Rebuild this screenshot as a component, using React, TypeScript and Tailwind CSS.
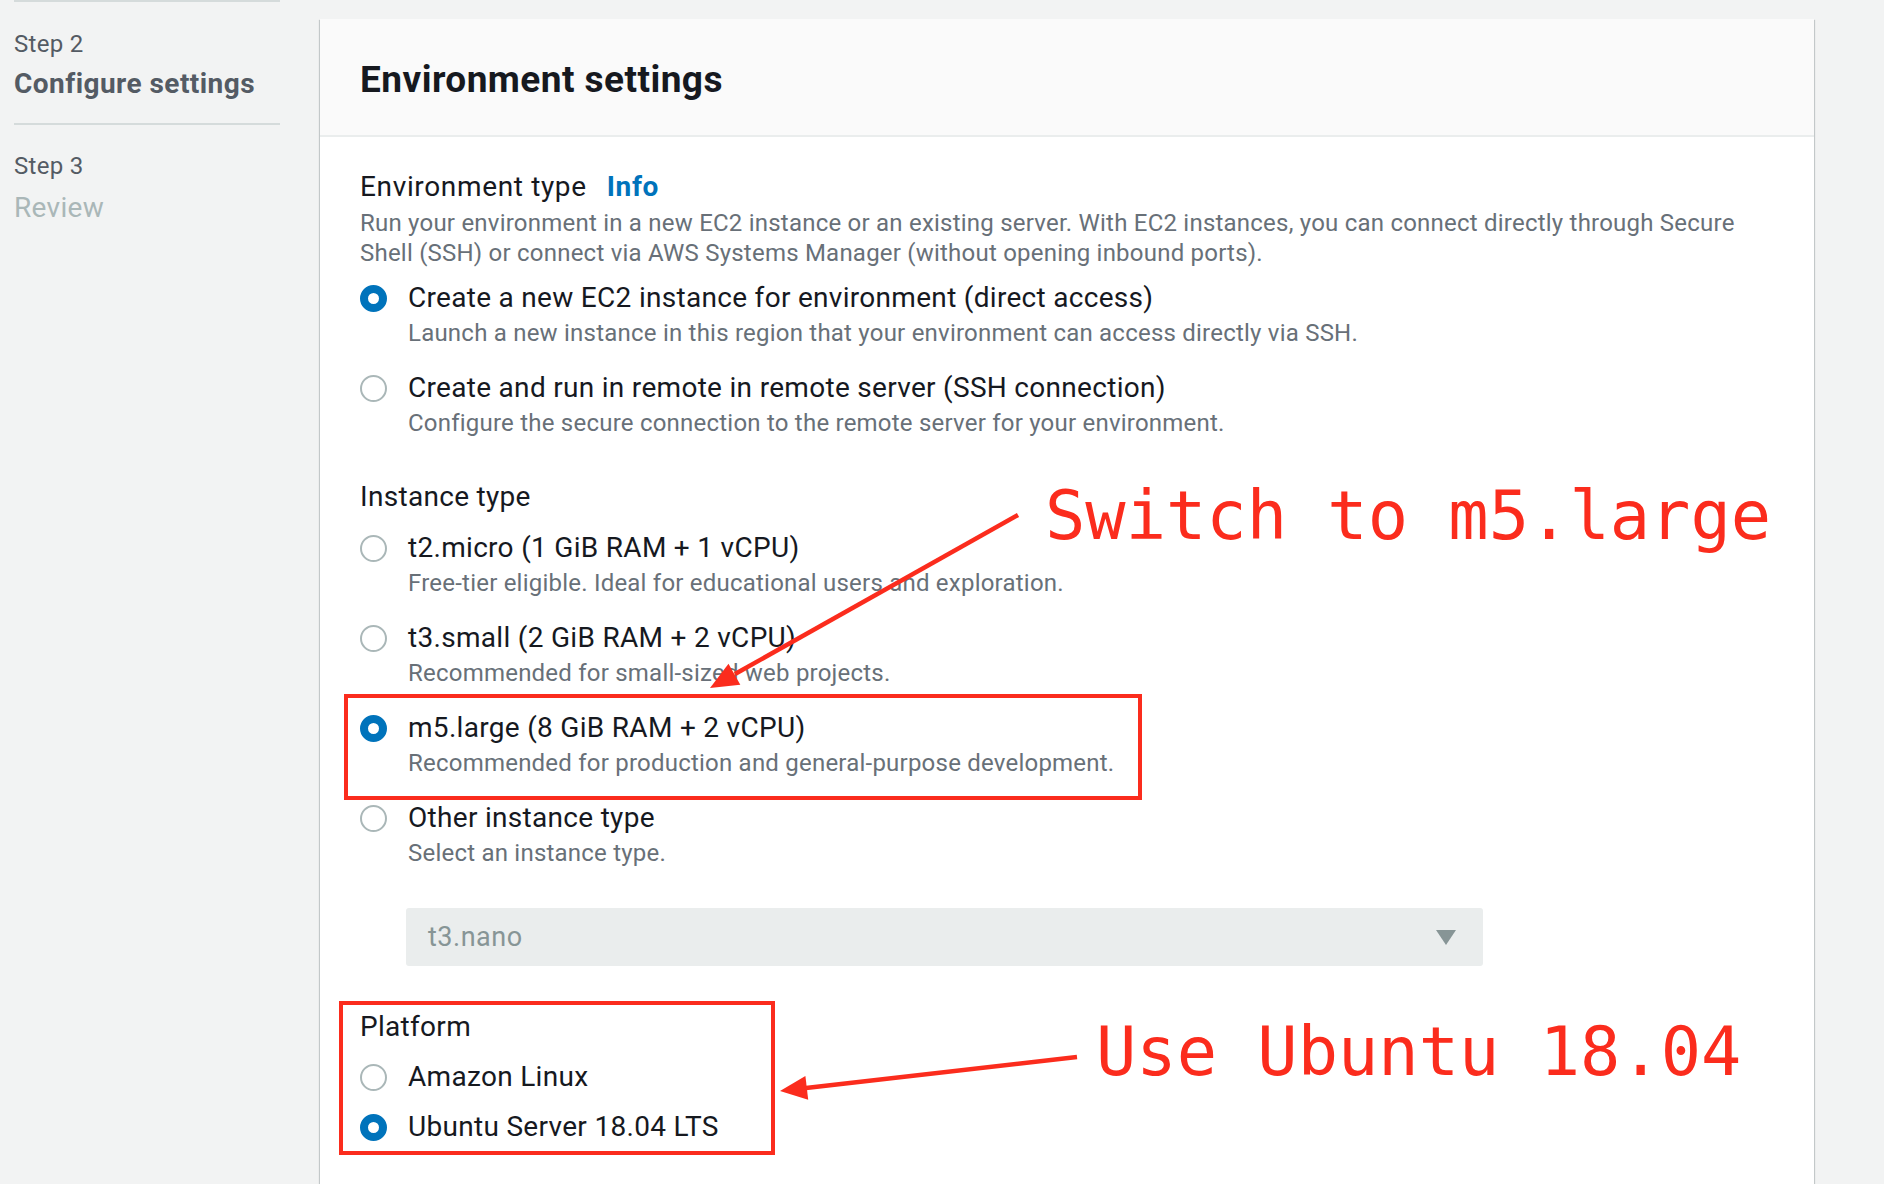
import React from "react";

const RED = "#fb2c1d";

function Radio({ checked }: { checked?: boolean }) {
  return checked ? (
    <span className="block w-[27px] h-[27px] rounded-full border-[8px] border-[#0073bb] bg-white shrink-0" />
  ) : (
    <span className="block w-[27px] h-[27px] rounded-full border-2 border-[#aab7b8] bg-white shrink-0" />
  );
}

function Option({ label, desc, checked }: { label: string; desc?: string; checked?: boolean }) {
  return (
    <div className="flex gap-[21px]">
      <div className="h-[38px] flex items-center">
        <Radio checked={checked} />
      </div>
      <div>
        <div className="text-[28px] leading-[38px] tracking-[0.3px] text-[#16191f] whitespace-nowrap">{label}</div>
        {desc && (
          <div className="text-[24px] leading-[32px] tracking-[0.22px] text-[#687078] whitespace-nowrap">{desc}</div>
        )}
      </div>
    </div>
  );
}

export default function App() {
  return (
    <div
      className="relative w-[1884px] h-[1184px] overflow-hidden bg-[#f2f3f3]"
      style={{ fontFamily: "Roboto, 'Noto Sans', sans-serif" }}
    >
      <div className="flex">
        {/* Sidebar */}
        <div className="pl-[14px] w-[280px] shrink-0 flex flex-col">
          <div className="h-[2px] bg-[#d5dbdb]" />
          <div className="mt-[26px] text-[24px] leading-[32px] tracking-[0.3px] text-[#545b64]">Step 2</div>
          <div className="mt-[6px] text-[28px] leading-[36px] tracking-[0.45px] font-bold text-[#545b64] whitespace-nowrap">
            Configure settings
          </div>
          <div className="mt-[21px] h-[2px] bg-[#d5dbdb]" />
          <div className="mt-[25px] text-[24px] leading-[32px] tracking-[0.3px] text-[#545b64]">Step 3</div>
          <div className="mt-[8px] text-[28px] leading-[36px] tracking-[0.3px] text-[#aab7b8]">Review</div>
        </div>

        {/* Card */}
        <div className="ml-[40px] mt-[19px] w-[1494px] h-[1300px] bg-white shadow-[0_1px_1px_0_rgba(0,28,36,0.3),1px_1px_1px_0_rgba(0,28,36,0.15),-1px_1px_1px_0_rgba(0,28,36,0.15)]">
          <div className="h-[118px] bg-[#fafafa] border-b-2 border-[#eaeded] pl-[40px] pt-[39px]">
            <div className="text-[37px] leading-[44px] tracking-[0.45px] font-bold text-[#16191f] whitespace-nowrap">
              Environment settings
            </div>
          </div>
          <div className="pl-[40px] pt-[32px] flex flex-col">
            <div className="text-[28px] leading-[36px] tracking-[0.65px] text-[#16191f] whitespace-nowrap">
              Environment type
              <span className="ml-[20px] font-bold text-[#0073bb]">Info</span>
            </div>
            <div className="mt-[3px] text-[24px] leading-[30px] tracking-[0.22px] text-[#687078] whitespace-nowrap">
              Run your environment in a new EC2 instance or an existing server. With EC2 instances, you can connect directly through Secure
              <br />
              Shell (SSH) or connect via AWS Systems Manager (without opening inbound ports).
            </div>
            <div className="mt-[11px] flex flex-col gap-[20px]">
              <Option
                checked
                label="Create a new EC2 instance for environment (direct access)"
                desc="Launch a new instance in this region that your environment can access directly via SSH."
              />
              <Option
                label="Create and run in remote in remote server (SSH connection)"
                desc="Configure the secure connection to the remote server for your environment."
              />
            </div>

            <div className="mt-[40px] text-[28px] leading-[36px] tracking-[0.3px] text-[#16191f]">Instance type</div>
            <div className="mt-[14px] flex flex-col gap-[20px]">
              <Option label="t2.micro (1 GiB RAM + 1 vCPU)" desc="Free-tier eligible. Ideal for educational users and exploration." />
              <Option label="t3.small (2 GiB RAM + 2 vCPU)" desc="Recommended for small-sized web projects." />
              <Option checked label="m5.large (8 GiB RAM + 2 vCPU)" desc="Recommended for production and general-purpose development." />
              <Option label="Other instance type" desc="Select an instance type." />
            </div>

            <div className="mt-[39px] ml-[46px] w-[1077px] h-[58px] rounded-[3px] bg-[#eaeded] flex items-center justify-between pl-[22px] pr-[27px]">
              <span className="text-[27px] tracking-[0.5px] text-[#879596]">t3.nano</span>
              <svg width="20" height="15" viewBox="0 0 20 15">
                <polygon points="0,0 20,0 10,15" fill="#879596" />
              </svg>
            </div>

            <div className="mt-[43px] text-[28px] leading-[36px] tracking-[0.3px] text-[#16191f]">Platform</div>
            <div className="mt-[13px] flex flex-col gap-[12px]">
              <Option label="Amazon Linux" />
              <Option checked label="Ubuntu Server 18.04 LTS" />
            </div>
          </div>
        </div>
      </div>

      {/* Annotations */}
      <div className="absolute left-[344px] top-[694px] w-[798px] h-[106px] border-4" style={{ borderColor: RED }} />
      <div className="absolute left-[339px] top-[1001px] w-[436px] h-[154px] border-4" style={{ borderColor: RED }} />

      <svg className="absolute left-0 top-0 pointer-events-none" width="1884" height="1184" viewBox="0 0 1884 1184">
        <line x1="1018" y1="515" x2="735" y2="674" stroke={RED} strokeWidth="4.5" />
        <polygon points="710,688 740.3,684.8 728.5,663.8" fill={RED} />
        <line x1="1077" y1="1057" x2="806" y2="1088" stroke={RED} strokeWidth="4.5" />
        <polygon points="780,1091 808.2,1099.8 805.4,1076" fill={RED} />
      </svg>

      <div
        className="absolute left-[1045px] top-[483px] text-[67px] leading-[67px] whitespace-nowrap"
        style={{ color: RED, fontFamily: "'DejaVu Sans Mono', monospace" }}
      >
        Switch to m5.large
      </div>
      <div
        className="absolute left-[1096px] top-[1019px] text-[67px] leading-[67px] whitespace-nowrap"
        style={{ color: RED, fontFamily: "'DejaVu Sans Mono', monospace" }}
      >
        Use Ubuntu 18.04
      </div>
    </div>
  );
}
